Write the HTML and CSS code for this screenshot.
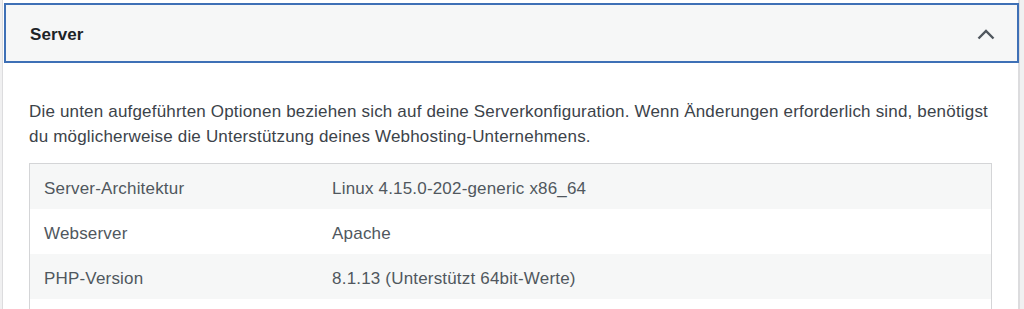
FILE: index.html
```html
<!DOCTYPE html>
<html lang="de">
<head>
  <meta charset="UTF-8" />
  <meta name="viewport" content="width=device-width, initial-scale=1.0"/>
  <title>Website-Zustand – Info</title>
  <link rel="stylesheet" href="styles.css">
</head>
<body>

  <div class="panel">
    <button class="accordion-trigger" aria-expanded="true">
      <span class="title">Server</span>
      <svg class="chevron" width="20" height="12" viewBox="0 0 20 12" aria-hidden="true">
        <polyline points="1.5,10.5 9,3 16.5,10.5" fill="none" stroke="#50575e" stroke-width="2.4" />
      </svg>
    </button>

    <div class="accordion-body">
      <p class="intro">Die unten aufgeführten Optionen beziehen sich auf deine Serverkonfiguration. Wenn Änderungen erforderlich sind, benötigst du möglicherweise die Unterstützung deines Webhosting-Unternehmens.</p>

      <table class="info-table">
        <tbody>
          <tr><td>Server-Architektur</td><td>Linux 4.15.0-202-generic x86_64</td></tr>
          <tr><td>Webserver</td><td>Apache</td></tr>
          <tr><td>PHP-Version</td><td>8.1.13 (Unterstützt 64bit-Werte)</td></tr>
          <tr class="more"><td></td><td></td></tr>
        </tbody>
      </table>
    </div>
  </div>

</body>
</html>
```

FILE: styles.css
```css
* { box-sizing: border-box; margin: 0; padding: 0; }

html, body {
  height: 100%;
  overflow: hidden;
}

body {
  background-color: #f0f0f1;
  font-family: "Liberation Sans", Arial, sans-serif;
  padding-left: 2px;
}

.panel {
  width: 1018px;
  min-height: 100%;
  background-color: #fff;
  border-left: 1px solid #dcdcde;
  border-right: 2px solid #dcdcde;
  padding-top: 3px;
}

.accordion-trigger {
  display: flex;
  align-items: center;
  justify-content: space-between;
  width: 1015px;
  height: 60px;
  margin-left: 1px;
  padding: 3px 20px 0 24px;
  background-color: #f6f7f7;
  border: 2px solid #3e70b6;
  font-family: inherit;
  font-size: 17px;
  font-weight: bold;
  line-height: 20px;
  letter-spacing: 0.1px;
  color: #1d2327;
  text-align: left;
  cursor: pointer;
}

.chevron { margin-top: -2px; }

.accordion-body {
  padding: 36px 26px 0 26px;
}

.intro {
  font-size: 17px;
  line-height: 25px;
  letter-spacing: 0.18px;
  color: #3c434a;
  margin-bottom: 14px;
}

.info-table {
  width: 963px;
  border-collapse: collapse;
  border: 1px solid #d4d5d7;
  font-size: 17px;
  line-height: 25px;
  letter-spacing: 0.18px;
  color: #50575e;
}

.info-table td {
  height: 45px;
  padding: 12px 14px 8px 14px;
  vertical-align: top;
}

.info-table td:first-child { width: 30%; }

.info-table tr:nth-child(odd) { background-color: #f6f7f7; }
```
